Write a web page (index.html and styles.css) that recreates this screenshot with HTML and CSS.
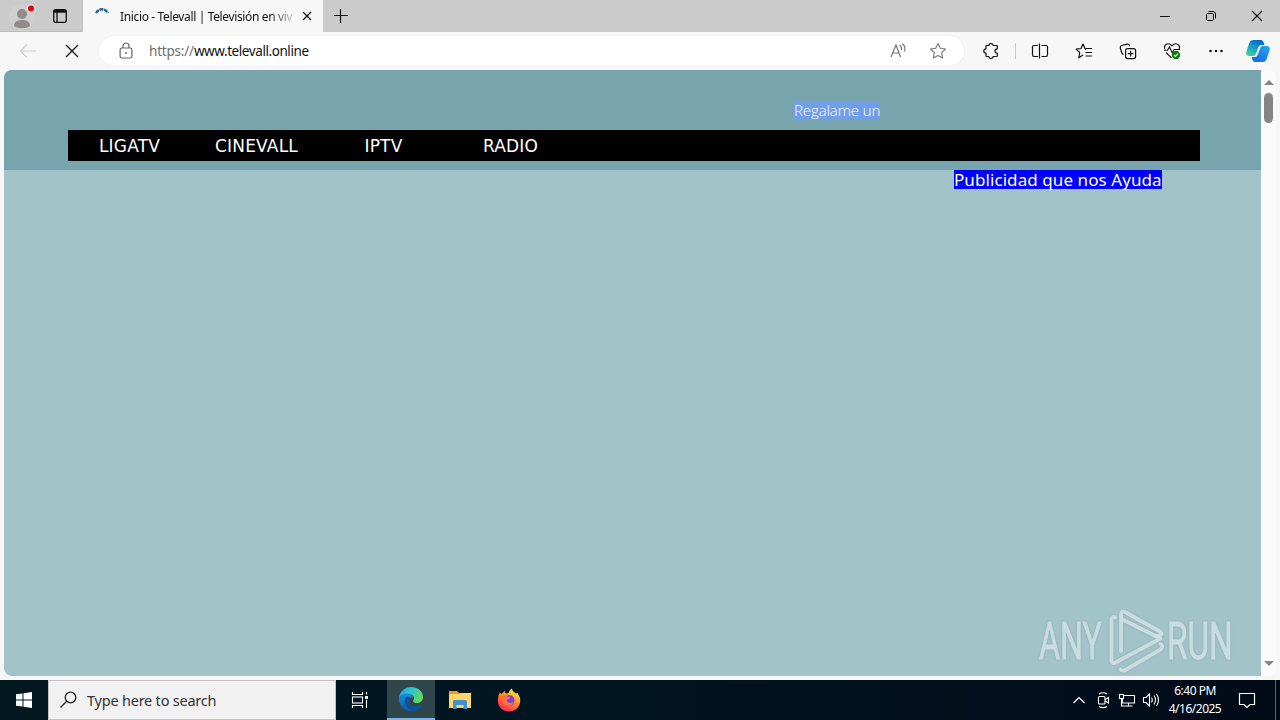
FILE: index.html
```html
<!DOCTYPE html>
<html lang="es">
<head>
    <meta charset="UTF-8">
    <title>Inicio - Televall | Televisión en vivo</title>
    <link rel="stylesheet" href="styles.css">
</head>
<body>
    <div class="tabbar">
        <div class="tab-left">
            <svg class="profile" width="28" height="28" viewBox="0 0 28 28">
                <circle cx="14" cy="14" r="13" fill="#d0cece"/>
                <circle cx="14" cy="11" r="5" fill="#8f8c8b"/>
                <path d="M6 23c0-4 3-6 8-6s8 2 8 6c-3 3-13 3-16 0z" fill="#8f8c8b"/>
                <circle cx="23" cy="5.500" r="4.500" fill="#dcdcdc"/>
                <circle cx="23" cy="5.500" r="3" fill="#e30613"/>
            </svg>
            <svg class="tabs-icon" width="16" height="16" viewBox="0 0 16 16" fill="none" stroke="#111" stroke-width="1.300">
                <rect x="1.700" y="1.700" width="12.600" height="12.600" rx="2"/>
                <path d="M2 3.200h12" stroke-width="3"/>
                <path d="M5 4v10"/>
            </svg>
        </div>
        <div class="tab">
            <svg class="spinner" width="16" height="16" viewBox="0 0 16 16" fill="none" stroke="#1b5f9e" stroke-width="2.400">
                <path d="M2 5C5 0 11 0 14 5" stroke-dasharray="4 .7"/>
            </svg>
            <span class="tab-title">Inicio - Televall | Televisión en viv</span>
            <svg class="tab-close" width="10" height="10" viewBox="0 0 10 10" stroke="#111" stroke-width="1.300"><path d="M1 1l8 8M9 1l-8 8"/></svg>
        </div>
        <svg class="new-tab" width="14" height="14" viewBox="0 0 14 14" stroke="#111" stroke-width="1.200"><path d="M6.500 0v14M0 6.500h14"/></svg>
        <div class="window-buttons">
            <span><svg width="12" height="12" viewBox="0 0 12 12" stroke="#111"><path d="M1 6.500h10"/></svg></span>
            <span><svg width="12" height="12" viewBox="0 0 12 12" fill="none" stroke="#111"><rect x="1.500" y="3.500" width="7" height="7" rx="1.200"/><path d="M3.500 1.500h4.500a2.500 2.500 0 0 1 2.500 2.500v4.500"/></svg></span>
            <span><svg width="12" height="12" viewBox="0 0 12 12" stroke="#111" stroke-width="1.100"><path d="M1 1l10 10M11 1L1 11"/></svg></span>
        </div>
    </div>

    <div class="toolbar">
        <div class="tool"><svg width="18" height="16" viewBox="0 0 18 16" fill="none" stroke="#cfcfcf" stroke-width="1.200"><path d="M17 8H1.500M8 1.500L1.500 8 8 14.500"/></svg></div>
        <div class="tool"><svg width="14" height="14" viewBox="0 0 14 14" stroke="#111" stroke-width="1.200"><path d="M1 1l12 12M13 1L1 13"/></svg></div>
        <div class="address">
            <svg class="lock" width="14" height="18" viewBox="0 0 14 18" fill="none" stroke="#666" stroke-width="1.200">
                <rect x="1.100" y="6" width="11.800" height="10" rx="1.800"/><path d="M4 6V4a3 3 0 0 1 6 0v2"/><circle cx="7" cy="11" r=".7" fill="#666" stroke-width=".6"/>
            </svg>
            <span class="url"><span class="scheme">https://</span>www.televall.online</span>
            <svg class="read" width="18" height="16" viewBox="0 0 18 16" fill="none" stroke="#777" stroke-width="1.200">
                <path d="M2 14L7 2 11.500 14M3.500 10h6.600M10.500 2q2.500 1.500 2 5M13.300 .5q3.700 3 2.200 8"/>
            </svg>
            <svg class="fav" width="18" height="18" viewBox="0 0 18 18" fill="none" stroke="#777" stroke-width="1.100" stroke-linejoin="round">
                <path d="M9 1.500l2.300 4.800 5.200.7-3.800 3.700.9 5.300L9 13.500 4.400 16l.9-5.300L1.500 7l5.200-.7z"/>
            </svg>
        </div>
        <div class="tool puzzle"><svg width="18" height="18" viewBox="0 0 18 18" fill="none" stroke="#111" stroke-width="1.200" stroke-linejoin="round"><path d="M4 3.500h2.800q.2-1.900 2.200-1.900t2.200 1.900H14.500q.8 0 .8.800v2.500q-2.300.2-2.300 2.200t2.300 2.200v2.500q0 .8-.8.800h-3.300q-.2 2-2.200 2t-2.200-2H4.800q-.8 0-.8-.8v-2.500q-2.200-.2-2.200-2.200T4 6.800z"/></svg></div>
        <div class="separator"></div>
        <div class="tool"><svg width="18" height="16" viewBox="0 0 18 16" fill="none" stroke="#111" stroke-width="1.200"><path d="M7 2.500H3a1.500 1.500 0 0 0-1.500 1.500v8a1.500 1.500 0 0 0 1.500 1.500h4M10.500 2.500h4.500a1.500 1.500 0 0 1 1.500 1.500v8a1.500 1.500 0 0 1-1.500 1.500h-4.500M8.500 .5v15"/></svg></div>
        <div class="tool"><svg width="18" height="16" viewBox="0 0 18 16" fill="none" stroke="#111" stroke-width="1.200" stroke-linejoin="round"><path d="M8 12L3.800 14.800 4.700 9.500 1.200 6.200 6 5.500 8 1l2 4.500h7M10.500 9.500H17M10.500 13H17M10 5.500L11 7"/></svg></div>
        <div class="tool"><svg width="18" height="17" viewBox="0 0 18 17" fill="none" stroke="#111" stroke-width="1.200"><rect x="6.600" y="5.600" width="10" height="10" rx="2"/><path d="M11.600 7.800v5.600M8.800 10.600h5.600M4.500 11.500Q3 11 2.500 9L1.300 4.800Q1 3 2.700 2.500L8 1.200q2-.4 2.700 1.500"/></svg></div>
        <div class="tool"><svg width="18" height="18" viewBox="0 0 18 18" fill="none" stroke="#111" stroke-width="1.100"><path d="M1.800 7C.5 3 5-.5 9 3.800 13-.5 17.500 3 16.200 7M1 8.200h3.500L6.500 5l2.800 6 1.700-3.500H17M3 10.500l5.500 5.300"/><circle cx="13" cy="13" r="4.200" fill="#107c10" stroke="none"/><path d="M11 13l1.500 1.500 2.600-3" stroke="#fff"/></svg></div>
        <div class="tool"><svg width="16" height="4" viewBox="0 0 16 4" fill="#111"><circle cx="2.500" cy="2" r="1.300"/><circle cx="8" cy="2" r="1.300"/><circle cx="13.500" cy="2" r="1.300"/></svg></div>
        <div class="tool copilot">
            <svg width="24" height="24" viewBox="0 0 24 24">
                <defs>
                    <linearGradient id="cpA" x1="0" y1="1" x2=".6" y2="0"><stop offset="0" stop-color="#5bd66c"/><stop offset=".45" stop-color="#19aec5"/><stop offset="1" stop-color="#0968cb"/></linearGradient>
                    <linearGradient id="cpB" x1="0" y1="1" x2="1" y2="0"><stop offset="0" stop-color="#1762dc"/><stop offset="1" stop-color="#22a9f4"/></linearGradient>
                </defs>
                <path d="M7 1h8q2 0 2.700 2.500L18.500 6h-3q-2.500 0-3.300 2.500L10 15q-.8 2-3 2H3.500Q-.5 17 .3 13L3.500 3.500Q4.500 1 7 1z" fill="url(#cpA)"/>
                <path d="M17 23H9q-2 0-2.700-2.500L5.800 18h2.700q2.500 0 3.300-2.500L14 9q.8-2 3-2h3.500q4 0 3.200 4L20.500 20.500Q19.500 23 17 23z" fill="url(#cpB)"/>
                <path d="M12.800 8.500q.8-1.800 3-1.800l-1.800 2-2.500 7q-.8 1.800-3 1.800l1.500-2z" fill="#fff"/>
            </svg>
        </div>
    </div>

    <div class="viewport">
        <div class="page">
            <header class="header">
                <div class="regalo"><span>Regalame un</span></div>
                <nav class="menu">
                    <a>LIGATV</a>
                    <a>CINEVALL</a>
                    <a>IPTV</a>
                    <a>RADIO</a>
                </nav>
            </header>
            <div class="ads"><span>Publicidad que nos Ayuda</span></div>
        </div>
        <div class="scrollbar">
            <i class="arrow-up"></i>
            <div class="thumb"></div>
            <i class="arrow-down"></i>
        </div>
        <svg class="watermark" width="230" height="70" viewBox="0 0 230 70">
            <g class="watermark-text">
                <text transform="translate(8 53) scale(.62 1)">ANY</text>
                <text transform="translate(136 53) scale(.64 1)">RUN</text>
            </g>
            <g transform="translate(.5 -1)" fill="none" stroke="#cfe1e5" stroke-opacity=".9" stroke-width="3.800" stroke-linejoin="round" stroke-linecap="round">
                <path d="M84 12.500q-4-2-4 3v40q0 4 4 2l45-24L90 14"/>
                <path d="M89.500 46V10q0-5 4-3l34 19q4 2 2 4l-5 1M89 64.500q2 2 5 .500l34-20q5-3 1-6"/>
            </g>
        </svg>
    </div>

    <div class="taskbar">
        <div class="start"><svg width="16" height="16" viewBox="0 0 16 16" fill="#fff"><path d="M0 2.300L6.500 1.400v6.100H0zM7.500 1.300L16 0v7.500H7.500zM0 8.500h6.500v6.100L0 13.700zM7.500 8.500H16V16l-8.500-1.300z"/></svg></div>
        <div class="search">
            <svg width="18" height="18" viewBox="0 0 18 18" fill="none" stroke="#222" stroke-width="1.300"><circle cx="10.500" cy="6.500" r="5.300"/><path d="M6.700 10.300L.5 16.500"/></svg>
            <span>Type here to search</span>
        </div>
        <div class="app task-view"><svg width="18" height="16" viewBox="0 0 18 16" fill="none" stroke="#fff" stroke-width="1.100"><path d="M1.500 0v2.500h10V0M1.500 16v-2.500h10V16M15.500 0v2.500M15.500 8v8"/><rect x="1.500" y="5" width="10" height="6"/><path d="M14 5.500h3" stroke-width="3"/></svg></div>
        <div class="app active">
            <svg width="24" height="24" viewBox="0 0 24 24">
                <defs>
                    <linearGradient id="edA" x1="0" y1="0" x2="1" y2=".4"><stop offset="0" stop-color="#1d9de0"/><stop offset=".5" stop-color="#2bc3d2"/><stop offset="1" stop-color="#62d85b"/></linearGradient>
                    <linearGradient id="edB" x1="0" y1="0" x2="0" y2="1"><stop offset="0" stop-color="#168fdc"/><stop offset="1" stop-color="#0c59a4"/></linearGradient>
                </defs>
                <path d="M0 11C1 4 6 0 12 0c7 0 12 4.500 12 10 0 4-3 6-6.500 6-3 0-4-1.500-3-3 2-4-2-6-5-6C5 7 1 9 0 12z" fill="url(#edA)"/>
                <path d="M0 11.500C1 8 5 6 9 6.500c3.500.5 5 2.500 5 4.500-3-1.500-5 1-4.500 4 .5 4 5.500 6 11.500 3.500 1-.4 1.300.2.8 1C19.500 22.500 16 24 12 24 4.500 24-.5 18 0 11.500z" fill="url(#edB)"/>
                <path d="M7 10c-3 5 0 12 7 13.700 3-.3 6-2 7.800-4.200.5-.8.2-1.400-.8-1C15 21 10 19 9.500 15c-.2-2 .5-3.500 2-4.200C10 9.500 8 9 7 10z" fill="#104b91" opacity=".8"/>
            </svg>
        </div>
        <div class="app folder"><svg width="22" height="20" viewBox="0 0 22 20"><path d="M0 1h8l2 2h11v4H0z" fill="#e79a22"/><path d="M0 4h11l1-1h10v15H0z" fill="#fdd667"/><path d="M4 19v-7.500q0-1.500 1.500-1.500h11q1.500 0 1.500 1.500V19h-3.500v-4h-7v4z" fill="#3f91cf"/></svg></div>
        <div class="app firefox">
            <svg width="24" height="24" viewBox="0 0 24 24">
                <defs><linearGradient id="ff" x1=".8" y1="0" x2=".2" y2="1"><stop offset="0" stop-color="#fff04a"/><stop offset=".4" stop-color="#ff9a23"/><stop offset=".75" stop-color="#ff4b43"/><stop offset="1" stop-color="#ed2869"/></linearGradient></defs>
                <path d="M3 4q.5 1.500 1.500 2L6 4.500Q7 3 8 3q-.2 2 1 2.500l3-.5Q12 2 15 .5q0 2.500 4 5l1.500-.5q3 4 2.700 8C22.700 19.500 18 23.500 12 23.500S.800 19 .800 12.500Q.800 7.500 3 4z" fill="url(#ff)"/>
                <circle cx="12" cy="12.500" r="5.500" fill="#7643e5"/>
                <path d="M5 8q3-1.500 5 .5l3 .5q0 2-3 2.500-1 3 3 3.500 2 0 3.500-1-1 4-5 4Q6 17.500 5 13z" fill="#ff7139"/>
            </svg>
        </div>
        <div class="tray">
            <span><svg width="14" height="14" viewBox="0 0 14 14" fill="none" stroke="#fff" stroke-width="1.200"><path d="M1.500 10L7 4.500 12.500 10"/></svg></span>
            <span><svg width="14" height="18" viewBox="0 0 14 18" fill="none" stroke="#fff" stroke-width="1.100"><rect x="2.500" y="5.500" width="6.500" height="7.500" rx="1"/><path d="M9 8.500l3.500-2v5.500l-3.500-2M3 3q4-2.500 8 0M3 15.500q4 2.500 8 0"/></svg></span>
            <span><svg width="18" height="16" viewBox="0 0 18 16" fill="none" stroke="#fff" stroke-width="1.100"><path d="M6 3.500h10.500v7.500H4.500V7M10.500 11v3M6.500 14h8"/><rect x="1.500" y="2.500" width="4" height="4"/><path d="M3.500 6.500V14h3"/></svg></span>
            <span><svg width="18" height="16" viewBox="0 0 18 16" fill="none" stroke="#fff" stroke-width="1.100"><path d="M1.500 5.500H4L7.500 2v12L4 10.500H1.500zM9.500 5.500q1.500 2.500 0 5M12 3.500q3 4.500 0 9M14.500 2q4 6 0 12"/></svg></span>
            <div class="clock"><div class="time">6:40 PM</div><div class="date">4/16/2025</div></div>
            <svg class="notice" width="18" height="18" viewBox="0 0 18 18" fill="none" stroke="#fff" stroke-width="1.200"><path d="M1.500 2.500h15v11H12l-3 3-3-3H1.500z"/></svg>
            <div class="show-desktop"></div>
        </div>
    </div>
</body>
</html>
```

FILE: styles.css
```css
* {
    box-sizing: border-box;
}
body {
    margin: 0;
    width: 1280px;
    height: 720px;
    overflow: hidden;
    background: #f7f7f7;
    font-family: "Noto Sans", "Open Sans", sans-serif;
}
svg {
    display: block;
    flex: none;
}
.tabbar {
    display: flex;
    height: 32px;
    background: #cbcbcb;
}
.tab-left {
    display: flex;
    align-items: center;
    width: 83px;
    padding-left: 8px;
    border-right: 1px solid #bcbcbc;
    border-bottom: 1px solid #bcbcbc;
    border-bottom-right-radius: 4px;
}
.profile {
    margin-top: 2px;
}
.tabs-icon {
    margin-left: 16px;
}
.tab {
    display: flex;
    align-items: center;
    width: 240px;
    padding-left: 11px;
    background: #f7f7f7;
}
.spinner {
    margin-bottom: 1px;
}
.tab-title {
    width: 176px;
    margin-left: 10px;
    white-space: nowrap;
    font-size: 12px;
    letter-spacing: -0.36px;
    color: #111;
    -webkit-mask-image: linear-gradient(to right, #000 150px, transparent 178px);
    mask-image: linear-gradient(to right, #000 150px, transparent 178px);
}
.tab-close {
    margin-left: 6px;
}
.new-tab {
    margin: 9px 0 0 11px;
}
.window-buttons {
    display: flex;
    margin-left: auto;
}
.window-buttons span {
    display: flex;
    align-items: center;
    justify-content: center;
    width: 46px;
}
.toolbar {
    display: flex;
    align-items: center;
    height: 38px;
    padding-left: 6px;
    background: #f7f7f7;
}
.tool {
    display: flex;
    align-items: center;
    justify-content: center;
    flex: none;
    width: 44px;
}
.address {
    display: flex;
    align-items: center;
    width: 865px;
    height: 30px;
    margin-left: 5px;
    padding-left: 20px;
    border-radius: 15px;
    background: #fff;
    box-shadow: 0 0 2px #e4e4e4;
}
.url {
    margin-left: 16px;
    font-size: 13.5px;
    letter-spacing: -0.42px;
    color: #111;
}
.scheme {
    color: #707070;
    letter-spacing: -0.2px;
}
.read {
    margin-left: auto;
}
.fav {
    margin: 0 17px 0 22px;
}
.puzzle {
    margin-left: 5px;
}
.separator {
    width: 1px;
    height: 16px;
    margin: 0 1px 0 2px;
    background: #c9c9c9;
}
.separator + .tool {
    margin-left: 1px;
}
.copilot {
    width: 40px;
}
.viewport {
    position: relative;
    display: flex;
    width: 1272px;
    height: 606px;
    margin-left: 4px;
    border-radius: 8px;
    overflow: hidden;
    background: #fff;
}
.page {
    width: 1257px;
    background: #a2c3c8;
}
.header {
    height: 100px;
    padding: 31px 0 0 64px;
    background: #77a4ad;
}
.regalo {
    height: 29px;
    padding-left: 726px;
    font-family: "Open Sans", sans-serif;
    font-size: 15px;
    font-weight: 300;
    line-height: 19px;
    letter-spacing: -0.1px;
    color: #fff;
}
.regalo span {
    display: inline-block;
    width: 86px;
    white-space: nowrap;
    background: #719ee8;
}
.menu {
    display: flex;
    width: 1132px;
    height: 31px;
    background: #000;
    font-family: "DejaVu Sans", sans-serif;
    font-size: 17px;
    line-height: 32px;
    letter-spacing: 0.2px;
    color: #fff;
}
.menu a {
    width: 127px;
    padding-right: 4px;
    text-align: center;
}
.ads {
    padding-left: 950px;
    font-size: 17px;
    line-height: 19px;
    letter-spacing: 0.08px;
    color: #fff;
}
.ads span {
    display: inline-block;
    width: 208px;
    height: 19px;
    white-space: nowrap;
    background: #00f;
}
.scrollbar {
    display: flex;
    flex-direction: column;
    align-items: center;
    width: 15px;
    padding: 10px 0;
    background: #fbfbfb;
}
.arrow-up,
.arrow-down {
    border: 5px solid transparent;
    border-top: 0;
    border-bottom-color: #858585;
}
.arrow-down {
    margin-top: auto;
    border-top: 5px solid #858585;
    border-bottom: 0;
}
.thumb {
    width: 9px;
    height: 30px;
    margin-top: 8px;
    border-radius: 5px;
    background: #858585;
}
.watermark {
    position: absolute;
    left: 1027px;
    top: 536px;
    filter: drop-shadow(0 0 1px #8aaab0);
}
.watermark-text {
    font-family: Roboto, sans-serif;
    font-size: 52px;
    fill: #c9dde1;
    stroke: #c9dde1;
    stroke-width: 0.8px;
}
.taskbar {
    display: flex;
    height: 40px;
    margin-top: 4px;
    background: linear-gradient(to right, #011820, #001520 45%, #020a18);
}
.start,
.app {
    display: flex;
    align-items: center;
    justify-content: center;
    flex: none;
    width: 48px;
}
.search {
    display: flex;
    align-items: center;
    width: 288px;
    padding-left: 11px;
    border: 1px solid #c7c2c0;
    background: #f1f1f1;
    font-size: 14.5px;
    color: #333;
}
.search span {
    margin-left: 9px;
    letter-spacing: -0.22px;
}
.active {
    margin-left: 3px;
    background: #30464d;
    border-bottom: 2px solid #77b5e8;
}
.folder,
.firefox {
    margin-left: 1px;
}
.tray {
    display: flex;
    align-items: center;
    margin-left: auto;
    color: #fff;
}
.tray span {
    display: flex;
    justify-content: center;
    width: 24px;
}
.clock {
    width: 64px;
    text-align: center;
    font-size: 12px;
    line-height: 18px;
    letter-spacing: -0.5px;
    white-space: nowrap;
}
.notice {
    margin-left: 11px;
}
.show-desktop {
    width: 5px;
    height: 40px;
    margin-left: 19px;
    border-left: 1px solid #5a626c;
}
```
